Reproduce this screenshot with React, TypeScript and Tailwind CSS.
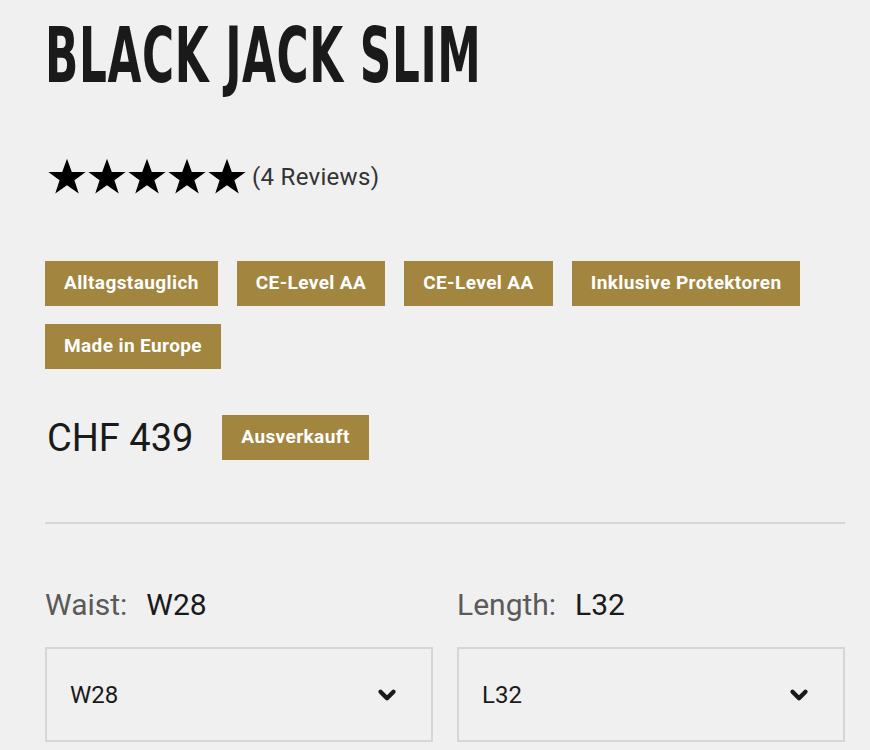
import { ChevronDown } from "lucide-react";

const tags = [
  "Alltagstauglich",
  "CE-Level AA",
  "CE-Level AA",
  "Inklusive Protektoren",
  "Made in Europe",
];

function Star() {
  return (
    <svg width="40" height="38" viewBox="0 0 24 23" className="block">
      <path
        d="M12 0.5l2.9 7.9h8.4l-6.8 5 2.6 8.1L12 16.5l-7.1 5 2.6-8.1-6.8-5h8.4z"
        fill="#000"
      />
    </svg>
  );
}

function Tag({ label }: { label: string }) {
  return (
    <span className="inline-flex h-[45px] items-center bg-[#a2863f] px-[19px] text-[19px] font-bold tracking-[0.4px] text-white">
      {label}
    </span>
  );
}

function Auswahl({ label, wert }: { label: string; wert: string }) {
  return (
    <div className="flex flex-col">
      <div className="flex items-baseline gap-[19px] text-[30px] leading-none">
        <span className="text-[#5a5a5a]">{label}:</span>
        <span className="text-[#1a1a1a]">{wert}</span>
      </div>
      <div className="mt-[27px] flex h-[95px] items-center justify-between border-2 border-[#d6d6d6] pl-[23px] pr-[31px]">
        <span className="text-[24px] text-[#1a1a1a]">{wert}</span>
        <ChevronDown className="h-[26px] w-[26px] text-[#1a1a1a]" strokeWidth={4} />
      </div>
    </div>
  );
}

export default function App() {
  return (
    <div
      className="min-h-[750px] w-[870px] overflow-hidden bg-[#f0f0f0] pl-[45px] pr-[25px] pt-[18px]"
      style={{ fontFamily: "Roboto, 'Liberation Sans', sans-serif" }}
    >
      <h1
        className="inline-block origin-left scale-x-[0.64] whitespace-nowrap text-[76px] font-bold leading-none tracking-[1px] text-[#1a1a1a]"
        style={{ fontFamily: "'DejaVu Sans Condensed', 'DejaVu Sans', sans-serif" }}
      >
        BLACK JACK SLIM
      </h1>

      <div className="mt-[64px] flex items-center">
        <div className="flex pl-[2px]">
          <Star />
          <Star />
          <Star />
          <Star />
          <Star />
        </div>
        <span className="ml-[5px] text-[24px] tracking-[0.3px] text-[#333]">(4 Reviews)</span>
      </div>

      <div className="mt-[65px] flex flex-wrap gap-x-[19px] gap-y-[18px]">
        {tags.map((t, i) => (
          <Tag key={i} label={t} />
        ))}
      </div>

      <div className="mt-[46px] flex items-center gap-[29px]">
        <span className="pl-[2px] text-[38px] leading-none text-[#1a1a1a]">CHF 439</span>
        <Tag label="Ausverkauft" />
      </div>

      <div className="mt-[62px] h-[2px] bg-[#d6d6d6]" />

      <div className="mt-[66px] grid grid-cols-2 gap-[24px]">
        <Auswahl label="Waist" wert="W28" />
        <Auswahl label="Length" wert="L32" />
      </div>
    </div>
  );
}
